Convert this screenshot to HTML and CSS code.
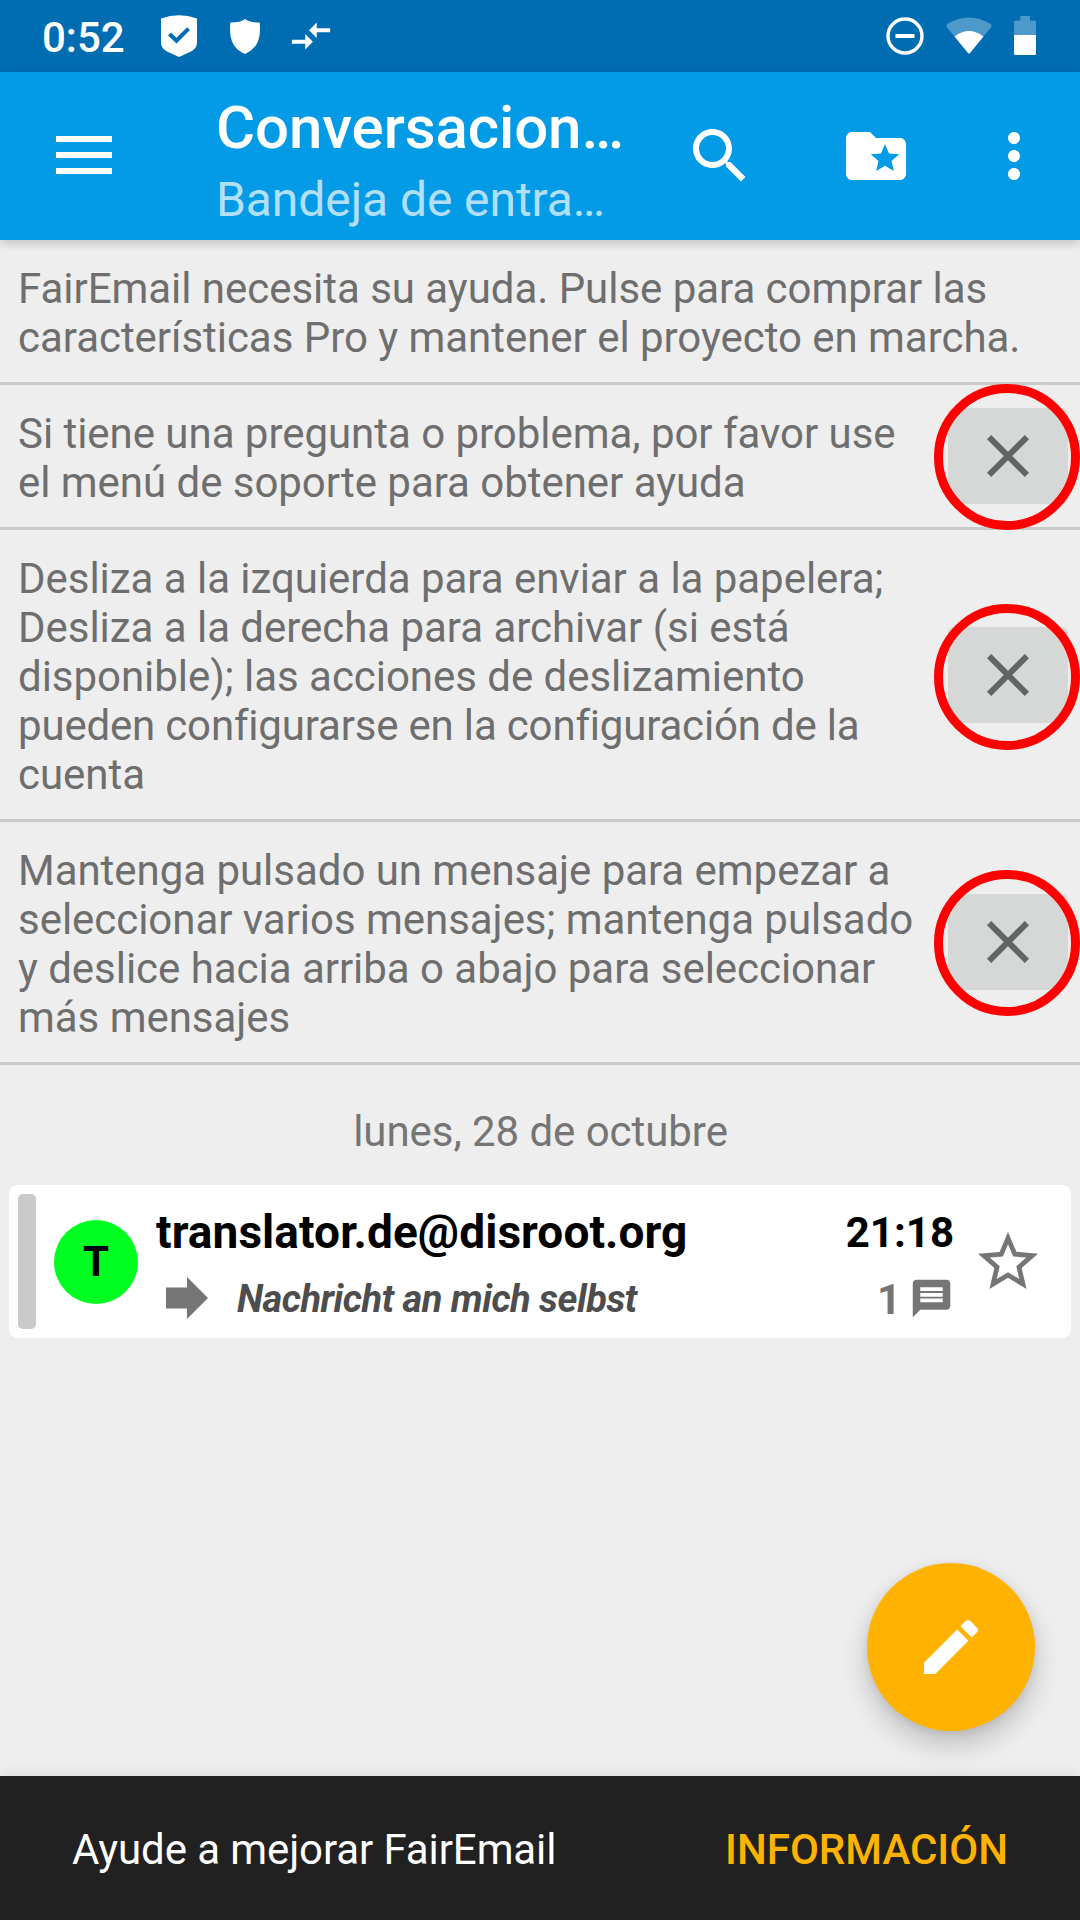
FILE: index.html
```html
<!DOCTYPE html>
<html lang="es">
<head>
<meta charset="utf-8">
<title>FairEmail</title>
<link rel="stylesheet" href="styles.css">
</head>
<body>
<div class="screen">
  <header class="status">
    <span class="clock">0:52</span>
    <svg class="st-check" viewBox="0 0 36 42"><path fill="#fff" fill-rule="evenodd" d="M0 3.500Q18-3 36 3.500V28Q36 33 30 36.500L18 42L6 36.500Q0 33 0 28ZM7 20.500L15.500 28.500L29 15L26.200 12.200L15.500 22.700L10 17.500Z"/></svg>
    <svg class="st-shield" viewBox="0 0 30 35"><path fill="#fff" d="M15 0Q19 3.500 29.700 3.500C31 19 28 29 15 35C2 29-1 19 .3 3.500Q11 3.500 15 0Z"/></svg>
    <svg class="st-arrows" viewBox="0 0 24 24"><path fill="#fff" d="M9.010 14H2v2h7.010v3L13 15l-3.990-4v3zm5.980-1v-3H22V8h-7.010V5L11 9l3.990 4z"/></svg>
    <span class="grow"></span>
    <svg class="st-dnd" viewBox="0 0 38 38"><circle cx="19" cy="19" r="17" fill="none" stroke="#fff" stroke-width="3.400"/><path fill="#fff" d="M9.500 17h19v4h-19z"/></svg>
    <svg class="st-wifi" viewBox="0 0 46 37"><path fill="#fff" fill-opacity=".3" d="M23 36.500L1 10.500Q-.5 8 2 6.500Q23-5.500 44 6.500Q46.500 8 45 10.500Z"/><path fill="#fff" d="M8.500 19.500Q23 8.500 37.500 19.500L24 36Q23 37 22 36Z"/></svg>
    <svg class="st-batt" viewBox="0 0 22 39"><path fill="#fff" fill-opacity=".3" d="M6.300 0h9.700v4.500h4.500q1.500 0 1.500 1.500v13H0V6q0-1.500 1.500-1.500h4.800z"/><path fill="#fff" d="M0 19h22v18.500q0 1.500-1.500 1.500h-19Q0 39 0 37.500z"/></svg>
  </header>

  <nav class="appbar">
    <svg class="menu" viewBox="0 0 56 38"><path fill="#fff" d="M0 0h56v6H0zM0 16h56v6H0zM0 32h56v6H0z"/></svg>
    <div class="titles">
      <div class="title">Conversacion…</div>
      <div class="subtitle">Bandeja de entra…</div>
    </div>
    <svg class="icon search" viewBox="0 0 24 24"><path fill="#fff" d="M15.500 14h-.79l-.28-.27C15.410 12.590 16 11.110 16 9.500 16 5.910 13.090 3 9.500 3S3 5.910 3 9.500 5.910 16 9.500 16c1.610 0 3.090-.59 4.230-1.570l.27.28v.79l5 4.990L20.490 19l-4.990-5zm-6 0C7.010 14 5 11.990 5 9.500S7.010 5 9.500 5 14 7.010 14 9.500 11.990 14 9.500 14z"/></svg>
    <svg class="icon folder" viewBox="0 0 24 24"><path fill="#fff" d="M20 6h-8l-2-2H4c-1.100 0-1.990.9-1.990 2L2 18c0 1.100.9 2 2 2h16c1.100 0 2-.9 2-2V8c0-1.100-.9-2-2-2zm-2.060 11L15 15.280 12.060 17l.78-3.330-2.590-2.240 3.410-.29L15 8l1.340 3.140 3.410.29-2.590 2.240.78 3.330z"/></svg>
    <svg class="icon more" viewBox="0 0 24 24"><path fill="#fff" d="M12 8c1.100 0 2-.9 2-2s-.9-2-2-2-2 .9-2 2 .9 2 2 2zm0 2c-1.100 0-2 .9-2 2s.9 2 2 2 2-.9 2-2-.9-2-2-2zm0 6c-1.100 0-2 .9-2 2s.9 2 2 2 2-.9 2-2-.9-2-2-2z"/></svg>
  </nav>

  <main class="content">
    <section class="hint"><p>FairEmail necesita su ayuda. Pulse para comprar las<br>características Pro y mantener el proyecto en marcha.</p></section>
    <section class="hint">
      <p>Si tiene una pregunta o problema, por favor use<br>el menú de soporte para obtener ayuda</p>
      <div class="close"><svg class="icon" viewBox="0 0 24 24"><path d="M19 6.410L17.590 5 12 10.590 6.410 5 5 6.410 10.590 12 5 17.590 6.410 19 12 13.410 17.590 19 19 17.590 13.410 12z"/></svg><span class="ring"></span></div>
    </section>
    <section class="hint">
      <p>Desliza a la izquierda para enviar a la papelera;<br>Desliza a la derecha para archivar (si está<br>disponible); las acciones de deslizamiento<br><span class="tight">pueden configurarse en la configuración de la</span><br>cuenta</p>
      <div class="close"><svg class="icon" viewBox="0 0 24 24"><path d="M19 6.410L17.590 5 12 10.590 6.410 5 5 6.410 10.590 12 5 17.590 6.410 19 12 13.410 17.590 19 19 17.590 13.410 12z"/></svg><span class="ring ring-low"></span></div>
    </section>
    <section class="hint">
      <p>Mantenga pulsado un mensaje para empezar a<br>seleccionar varios mensajes; mantenga pulsado<br>y deslice hacia arriba o abajo para seleccionar<br>más mensajes</p>
      <div class="close"><svg class="icon" viewBox="0 0 24 24"><path d="M19 6.410L17.590 5 12 10.590 6.410 5 5 6.410 10.590 12 5 17.590 6.410 19 12 13.410 17.590 19 19 17.590 13.410 12z"/></svg><span class="ring"></span></div>
    </section>

    <h2 class="date">lunes, 28 de octubre</h2>

    <article class="mail">
      <span class="stripe"></span>
      <span class="avatar">T</span>
      <div class="body">
        <div class="line top"><span class="from">translator.de@disroot.org</span><span class="time">21:18</span></div>
        <div class="line bottom">
          <svg class="arrow" viewBox="0 0 42 42"><path fill="#757575" d="M0 10.500h21V0l21 21-21 21V31.500H0z"/></svg>
          <span class="subject">Nachricht an mich selbst</span>
          <span class="count">1</span>
          <svg class="bubble" viewBox="0 0 24 24"><path fill="#757575" d="M20 2H4c-1.100 0-1.990.9-1.990 2L2 22l4-4h14c1.100 0 2-.9 2-2V4c0-1.100-.9-2-2-2zm-2 12H6v-2h12v2zm0-3H6V9h12v2zm0-3H6V6h12v2z"/></svg>
        </div>
      </div>
      <svg class="icon star" viewBox="0 0 24 24"><path fill="#757575" d="M22 9.240l-7.190-.62L12 2 9.190 8.630 2 9.240l5.460 4.730L5.820 21 12 17.270 18.180 21l-1.630-7.030L22 9.240zM12 15.400l-3.760 2.270 1-4.280-3.320-2.880 4.380-.38L12 6.100l1.710 4.040 4.380.38-3.320 2.880 1 4.280L12 15.400z"/></svg>
    </article>
  </main>

  <div class="fab"><svg class="icon" viewBox="0 0 24 24"><path fill="#fff" d="M3 17.250V21h3.750L17.810 9.940l-3.750-3.750L3 17.250zM20.710 7.040c.39-.39.39-1.020 0-1.410l-2.340-2.340c-.39-.39-1.020-.39-1.410 0l-1.830 1.830 3.750 3.750 1.830-1.830z"/></svg></div>

  <footer class="snackbar"><span>Ayude a mejorar FairEmail</span><span class="action">INFORMACIÓN</span></footer>
</div>
</body>
</html>
```
FILE: styles.css
```css
* { box-sizing: border-box; }
body { margin: 0; font-family: Roboto, sans-serif; font-size: 42px; }
svg { display: block; flex: none; }
p, h2 { margin: 0; }
.screen { position: relative; display: flex; flex-direction: column; width: 1080px; height: 1920px; overflow: hidden; background: #eee; }
.grow { flex: 1; }
.icon { width: 72px; height: 72px; }

.status { display: flex; align-items: flex-start; height: 72px; padding: 0 44px 0 42px; background: #006db3; color: #fff; }
.clock { width: 119px; margin-top: 13px; line-height: 49px; font-weight: 500; }
.st-check { width: 36px; height: 42px; margin-top: 15px; }
.st-shield { width: 30px; height: 35px; margin: 19px 0 0 33px; }
.st-arrows { width: 46px; height: 46px; margin: 13px 0 0 28px; }
.st-dnd { width: 38px; height: 38px; margin: 17px 0 0; }
.st-wifi { width: 46px; height: 37px; margin: 17px 0 0 22px; }
.st-batt { width: 22px; height: 39px; margin: 16px 0 0 22px; }

.appbar { z-index: 1; display: flex; align-items: flex-start; height: 168px; padding-left: 56px; background: #039be5; color: #fff; box-shadow: 0 3px 10px rgba(0, 0, 0, .2); }
.menu { width: 56px; height: 38px; margin-top: 64px; }
.titles { width: 468px; margin-left: 104px; padding-top: 21px; white-space: nowrap; }
.title { font-size: 60px; line-height: 70px; font-weight: 500; letter-spacing: -.1px; }
.subtitle { margin-top: 9px; font-size: 48px; line-height: 56px; letter-spacing: -.08px; color: rgba(255, 255, 255, .7); }
.search, .folder, .more { margin-top: 48px; }
.folder { margin-left: 84px; }
.more { margin-left: 66px; }

.content { flex: 1; }
.hint { display: flex; align-items: center; justify-content: space-between; padding-right: 12px; border-bottom: 3px solid #cacaca; color: #6e6e6e; line-height: 49px; letter-spacing: -.035px; font-variant-ligatures: none; }
.hint p { padding: 24px 0 20px 18px; white-space: nowrap; }
.tight { letter-spacing: -.18px; }
.close { position: relative; display: flex; align-items: center; justify-content: center; width: 120px; height: 96px; border-radius: 6px; background: #d6d8d7; }
.close path { fill: #636563; }
.ring { position: absolute; left: -14px; top: -24px; width: 146px; height: 146px; border: 9px solid #f00; border-radius: 50%; }
.ring-low { top: -23px; }

.date { margin-top: 42px; padding-left: 1px; line-height: 49px; text-align: center; font-size: 42px; font-weight: 400; letter-spacing: -.05px; color: #757575; }
.mail { display: flex; align-items: center; height: 153px; margin: 29px 9px 0; padding: 9px; border-radius: 9px; background: #fff; }
.stripe { width: 18px; height: 135px; border-radius: 5px; background: #cacaca; }
.avatar { width: 84px; height: 84px; margin-left: 18px; border-radius: 50%; background: #00ff21; text-align: center; line-height: 84px; font-weight: 700; color: #000; }
.body { width: 798px; height: 135px; margin-left: 18px; padding-top: 11px; white-space: nowrap; }
.line { display: flex; align-items: flex-start; }
.top { justify-content: space-between; height: 71px; line-height: 54px; font-weight: 700; color: #000; }
.from { font-size: 46px; letter-spacing: .08px; }
.time { padding-top: 1px; }
.bottom { padding: 0 0 0 10px; line-height: 46px; }
.arrow { width: 42px; height: 42px; margin-top: 1px; }
.subject { flex: 1; margin-left: 29px; font-size: 38px; font-weight: 700; font-style: italic; letter-spacing: -.5px; color: #4d4d4d; }
.count { padding-top: 1px; font-weight: 700; color: #757575; }
.bubble { width: 45px; height: 45px; margin-left: 8px; }
.star { margin-left: 18px; }

.fab { position: absolute; left: 867px; top: 1563px; display: flex; align-items: center; justify-content: center; width: 168px; height: 168px; border-radius: 50%; background: #ffb300; box-shadow: 0 14px 28px rgba(0, 0, 0, .2), 0 2px 10px rgba(0, 0, 0, .08); }
.snackbar { z-index: 1; display: flex; align-items: center; justify-content: space-between; height: 144px; padding: 3px 72px 0; background: #212121; color: #fff; letter-spacing: -.1px; box-shadow: 0 0 14px rgba(0, 0, 0, .1); }
.action { font-weight: 500; letter-spacing: 0; color: #ffb300; }
```
